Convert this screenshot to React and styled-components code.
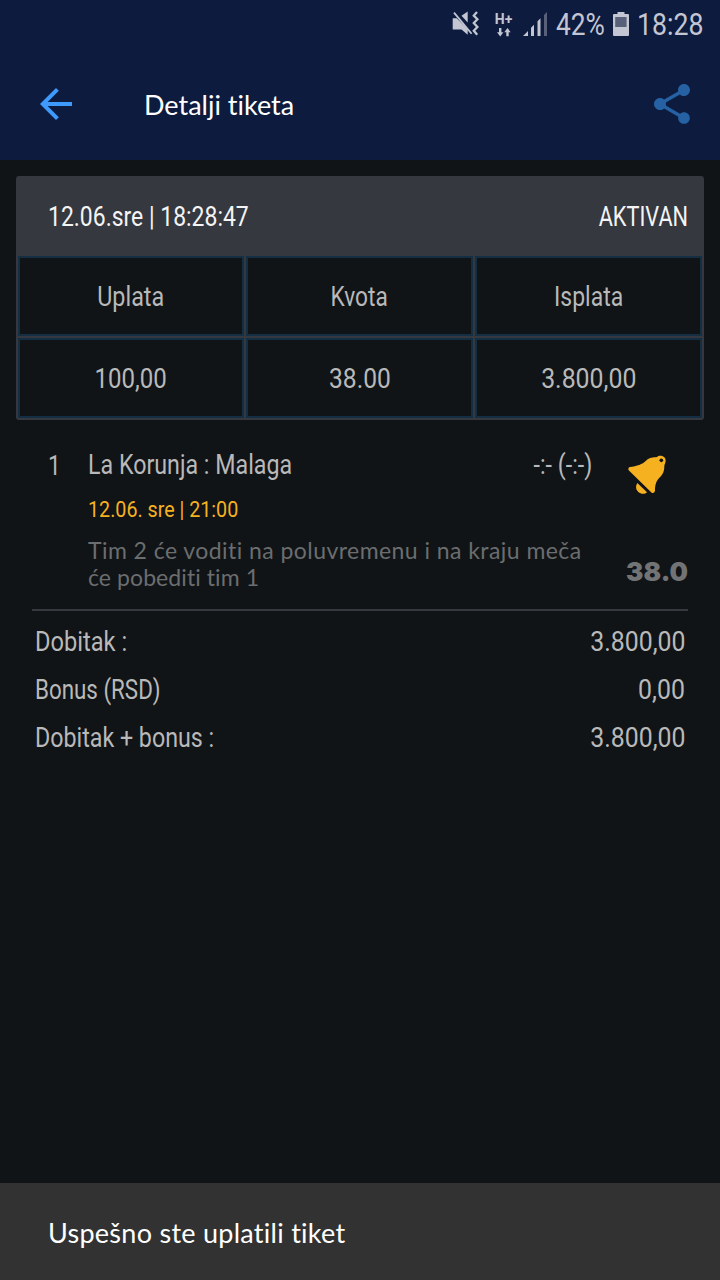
import React from 'react'
import styled, { createGlobalStyle } from 'styled-components'
import { MdArrowBack, MdShare } from 'react-icons/md'

const GlobalStyle = createGlobalStyle`
  * {
    box-sizing: border-box;
  }
  body {
    margin: 0;
    background-color: #101416;
    font-family: Roboto, "Liberation Sans", sans-serif;
    font-variant-ligatures: none;
  }
`

const summary = [
  { text: 'Uplata', scale: 0.865 },
  { text: 'Kvota', scale: 0.84 },
  { text: 'Isplata', scale: 0.85 },
  { text: '100,00', scale: 0.89 },
  { text: '38.00', scale: 0.91 },
  { text: '3.800,00', scale: 0.92 },
]

const totals = [
  { label: 'Dobitak :', value: '3.800,00', scale: 0.875 },
  { label: 'Bonus (RSD)', value: '0,00', scale: 0.828 },
  { label: 'Dobitak + bonus :', value: '3.800,00', scale: 0.86 },
]

const MutedIcon = () => (
  <svg width="28" height="26" viewBox="452 12 28 26" fill="#c3c6d2">
    <path d="M452.7 19.2h4l11 11v5.6l-6.2-5.4h-8.8z" />
    <path d="M461.5 16.8l6.2-4.4v11z" />
    <path d="M454 13.6l17.6 21.2" stroke="#c3c6d2" strokeWidth="1.8" />
    <path d="M477 13l-3.2 3.6 3.6 3.6-3.6 3.8 3.6 4-3.6 3.8 3.4 4" fill="none" stroke="#c3c6d2" strokeWidth="2.3" />
  </svg>
)

const DataIcon = () => (
  <DataBox>
    <span>H+</span>
    <svg width="14" height="9" viewBox="0 0 14 9" fill="#c3c6d2">
      <path d="M2 0h2.4v4.2h2L3.2 8.4 0 4.2h2zM9.3 8.2h2.4V4.2h2L10.5 0 7.3 4.2h2z" />
    </svg>
  </DataBox>
)

const SignalIcon = () => (
  <svg width="26" height="25" viewBox="522 12 26 25" fill="#c3c6d2">
    <path d="M523 36l5-5v5zM531 36v-8.2l3-3v11.2zM537.5 36v-14.8l3-3v17.8z" />
    <path d="M544 36v-21l3-3v24z" fill="#59617a" />
  </svg>
)

const BatteryIcon = () => (
  <svg width="16" height="24" viewBox="0 0 16 24">
    <path d="M4.5 0h7v2H15q1 0 1 1v20q0 1-1 1H1q-1 0-1-1V3q0-1 1-1h3.5z" fill="#c3c6d2" />
    <path d="M2.2 5h11.4v10H2.2z" fill="#59617a" />
  </svg>
)

const BellIcon = () => (
  <svg width="38" height="39" viewBox="384 45 114 117" fill="#f6b121">
    <path d="M389 81C411 78 427 73 438 62C449 51 460 53 471 51C477 44 497 46 497 62C497 67 494 72 493 77C493 92 490 102 478 113C467 125 465 137 465 152Q463 161 455 158L386 91Q383 84 389 81Z" />
    <circle cx="484" cy="61" r="5.5" fill="#101416" />
    <path d="M412 129L441 157C433 164 422 162 415 156C407 149 406 138 412 129Z" />
  </svg>
)

const App = () => {
  return (
    <Screen>
      <GlobalStyle />
      <StatusBar>
        <MutedIcon />
        <DataIcon />
        <SignalIcon />
        <StatusText>
          <Squeezed $scale={0.85}>42%</Squeezed>
        </StatusText>
        <BatteryIcon />
        <StatusText>
          <Squeezed $scale={0.86}>18:28</Squeezed>
        </StatusText>
      </StatusBar>
      <AppBar>
        <MdArrowBack size={48} color="#3e9bfd" />
        <Title>Detalji tiketa</Title>
        <MdShare size={48} color="#2561a3" />
      </AppBar>
      <Card>
        <CardHeader>
          <Squeezed $scale={0.85}>12.06.sre | 18:28:47</Squeezed>
          <Squeezed $scale={0.805} $origin="right">AKTIVAN</Squeezed>
        </CardHeader>
        <Grid>
          {summary.map(({ text, scale }) => (
            <Cell key={text}>
              <Squeezed $scale={scale} $origin="center">{text}</Squeezed>
            </Cell>
          ))}
        </Grid>
      </Card>
      <Match>
        <MatchIndex><Squeezed $scale={0.84}>1</Squeezed></MatchIndex>
        <MatchInfo>
          <Teams>
            <Squeezed $scale={0.86}>La Korunja : Malaga</Squeezed>
            <Squeezed $scale={0.86} $origin="right">-:- (-:-)</Squeezed>
          </Teams>
          <Kickoff><Squeezed $scale={0.895}>12.06. sre | 21:00</Squeezed></Kickoff>
          <Tip>
            <TipLine $spacing={0.44}>Tim 2 će voditi na poluvremenu i na kraju meča</TipLine>
            <TipLine $spacing={0.08}>će pobediti tim 1</TipLine>
          </Tip>
        </MatchInfo>
        <MatchSide>
          <BellIcon />
          <Odds>38.0</Odds>
        </MatchSide>
      </Match>
      <Totals>
        {totals.map(({ label, value, scale }) => (
          <TotalRow key={label}>
            <Squeezed $scale={scale}>{label}</Squeezed>
            <Squeezed $scale={0.92} $origin="right">{value}</Squeezed>
          </TotalRow>
        ))}
      </Totals>
      <Snackbar>Uspešno ste uplatili tiket</Snackbar>
    </Screen>
  )
}

const Screen = styled.div`
  display: flex;
  flex-direction: column;
  width: 720px;
  height: 1280px;
  overflow: hidden;
  color: #b9b9ba;
  font-size: 27px;
`

// condensed look for a regular-width face
const Squeezed = styled.span`
  display: inline-block;
  white-space: nowrap;
  transform: scaleX(${props => props.$scale});
  transform-origin: ${props => props.$origin || 'left'} center;
`

const StatusBar = styled.div`
  display: flex;
  align-items: center;
  flex-shrink: 0;
  height: 48px;
  padding-left: 452px;
  background-color: #0d1b3e;
  color: #c3c6d2;
  > svg:nth-child(3) {
    margin-left: 10px;
  }
  > svg:nth-child(5) {
    margin-left: 8px;
  }
`

const DataBox = styled.div`
  display: flex;
  flex-direction: column;
  align-items: center;
  width: 17px;
  margin-left: 15px;
  font-size: 14px;
  font-weight: 700;
  line-height: 14px;
  > svg {
    margin-top: 2px;
  }
`

const StatusText = styled.div`
  width: 49px;
  margin-left: 8px;
  padding-top: 2px;
  font-size: 31px;
  line-height: 46px;
`

const AppBar = styled.div`
  display: flex;
  align-items: center;
  flex-shrink: 0;
  height: 112px;
  padding: 0 24px 0 32px;
  background-color: #0d1b3e;
`

const Title = styled.h1`
  flex: 1;
  margin: 0 0 0 64px;
  color: #ffffff;
  font-family: Lato, sans-serif;
  font-size: 27px;
  font-weight: 400;
`

const Card = styled.div`
  flex-shrink: 0;
  height: 244px;
  margin: 16px 16px 0;
  border-radius: 3px;
  background-color: #36383f;
`

const CardHeader = styled.div`
  display: flex;
  align-items: center;
  justify-content: space-between;
  height: 80px;
  padding: 2px 16px 0 32px;
  color: #f4f4f5;
`

const Grid = styled.div`
  display: grid;
  grid-template-columns: 226px 227px 227px;
  grid-auto-rows: 80px;
  gap: 2px;
  padding: 0 2px 2px;
`

const Cell = styled.div`
  display: flex;
  align-items: center;
  justify-content: center;
  padding-top: 2px;
  border: 2px solid #142f43;
  background-color: #101416;
`

const Match = styled.div`
  display: flex;
  flex-shrink: 0;
  height: 191px;
  margin: 0 32px;
  padding-left: 16px;
  border-bottom: 2px solid #36393e;
`

const MatchIndex = styled.div`
  width: 40px;
  padding-top: 30px;
  line-height: 32px;
`

const MatchInfo = styled.div`
  width: 504px;
  padding-top: 29px;
`

const Teams = styled.div`
  display: flex;
  justify-content: space-between;
  line-height: 32px;
`

const Kickoff = styled.div`
  margin-top: 15px;
  color: #f6b121;
  font-size: 22px;
  line-height: 28px;
`

const Tip = styled.div`
  margin-top: 13px;
  color: #6b6d6f;
  font-family: Lato, sans-serif;
  font-size: 23px;
  line-height: 27px;
`

const TipLine = styled.div`
  letter-spacing: ${props => props.$spacing}px;
  white-space: nowrap;
`

const MatchSide = styled.div`
  display: flex;
  flex-direction: column;
  align-items: flex-end;
  justify-content: space-between;
  flex: 1;
  padding: 35px 0 23px;
  > svg {
    margin-right: 22px;
  }
`

const Odds = styled.div`
  color: #727375;
  font-family: Inter, sans-serif;
  font-size: 26px;
  font-weight: 900;
  line-height: 28px;
`

const Totals = styled.div`
  flex: 1;
  padding: 7px 35px 0;
`

const TotalRow = styled.div`
  display: flex;
  align-items: center;
  justify-content: space-between;
  height: 48px;
`

const Snackbar = styled.div`
  display: flex;
  align-items: center;
  flex-shrink: 0;
  height: 97px;
  padding: 1px 48px 0;
  background-color: #323232;
  color: #ffffff;
  font-family: Lato, sans-serif;
  font-size: 27px;
  letter-spacing: 0.27px;
`

export default App
